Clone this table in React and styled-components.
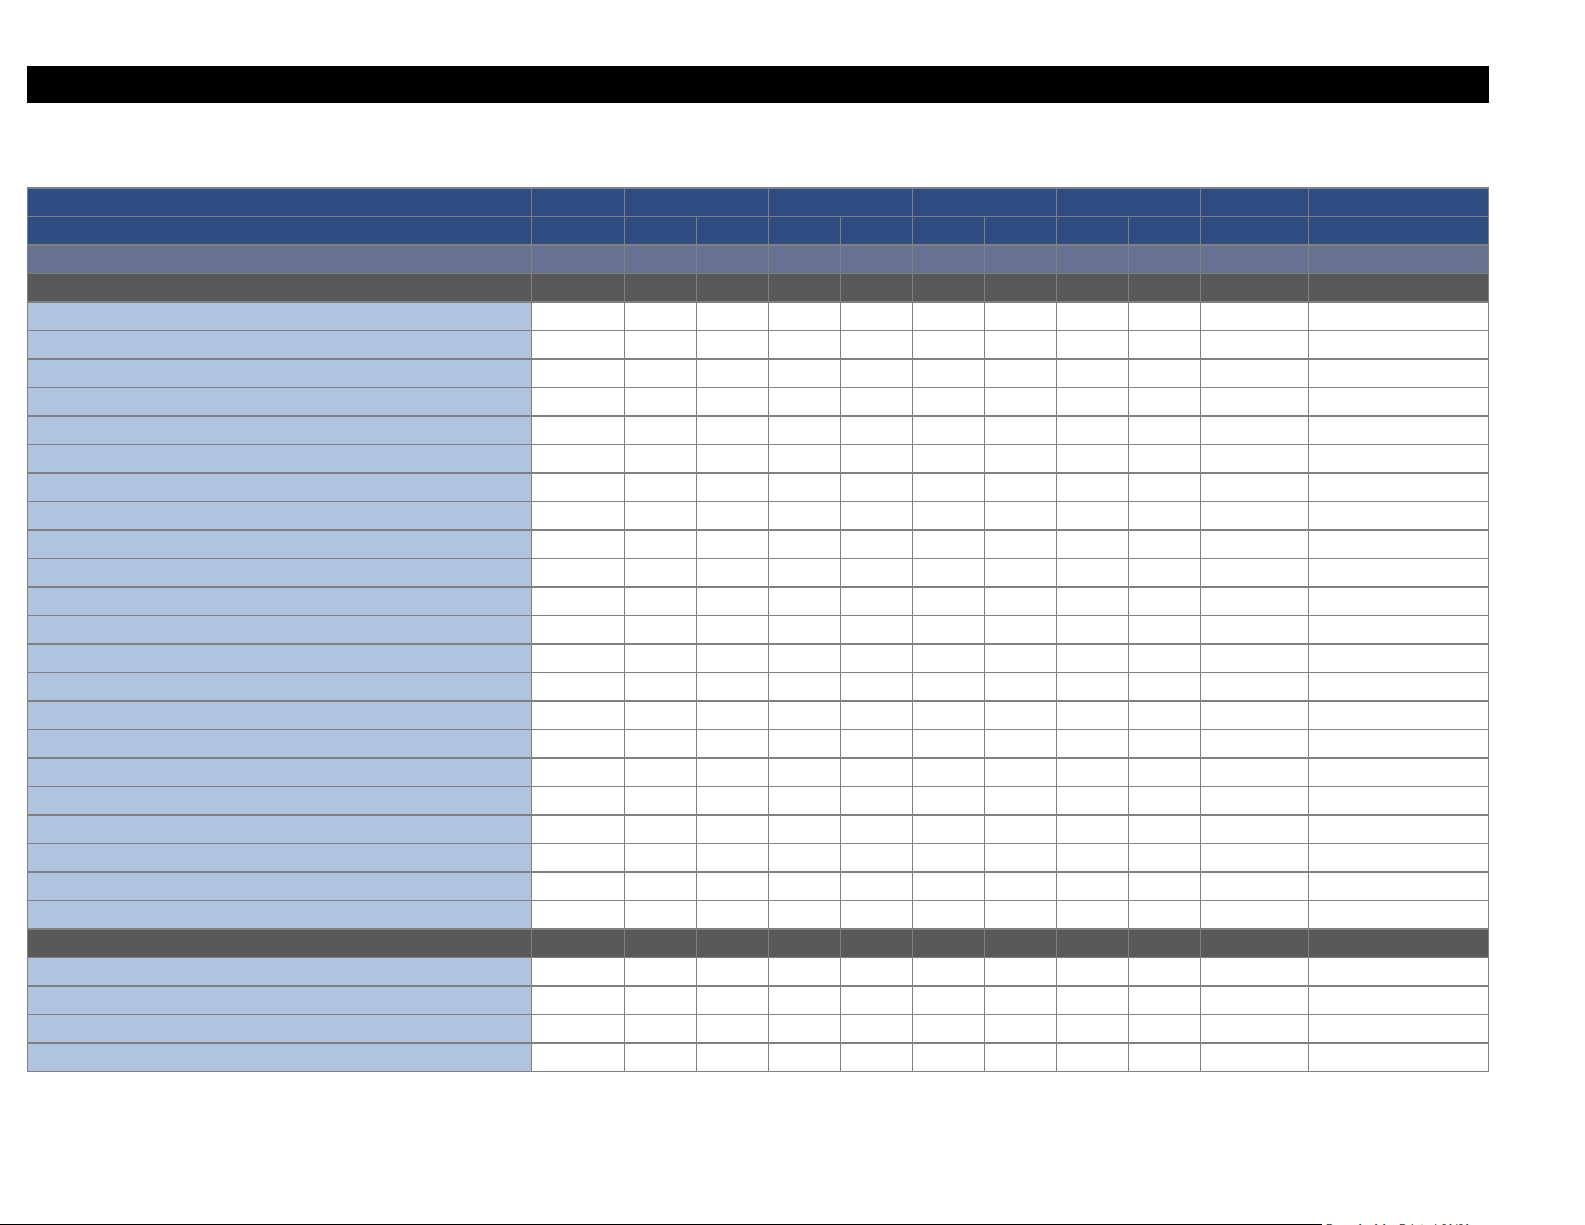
import React from "react";
import styled, { createGlobalStyle } from "styled-components";

const GlobalStyle = createGlobalStyle`
  html, body {
    margin: 0;
    padding: 0;
    background: #ffffff;
    overflow: hidden;
    font-family: "Liberation Sans", Arial, sans-serif;
  }
  * { box-sizing: border-box; }
`;

const Page = styled.div`
  width: 1585px;
  height: 1225px;
  display: flex;
  flex-direction: column;
  padding-top: 66px;
`;

const Content = styled.div`
  display: flex;
  flex-direction: column;
  padding-left: 27px;
  gap: 84px;
`;

const TitleBar = styled.div`
  width: 1462px;
  height: 37px;
  background: #000000;
`;

const Grid = styled.div`
  display: grid;
  grid-template-columns: 504px 93px repeat(8, 72px) 108px 180px;
  width: 1462px;
  border-top: 2px solid #808080;
  border-left: 1px solid #808080;
`;

const BG = {
  head: "#2f4d80",
  sub: "#667292",
  section: "#595959",
  label: "#b0c4de",
  data: "#ffffff",
};

const Cell = styled.div`
  grid-column: span ${(p) => p.$span || 1};
  height: ${(p) => (p.$thick ? 29 : 28)}px;
  background: ${(p) => BG[p.$kind]};
  border-right: 1px solid #808080;
  border-bottom: ${(p) => (p.$thick ? 2 : 1)}px solid #808080;
  color: #ffffff;
  font-size: 11px;
`;

const Footer = styled.div`
  margin-top: 152px;
  display: flex;
  align-items: flex-start;
  height: 1px;
`;

const FooterRule = styled.div`
  width: 1322px;
  border-top: 1px solid #000000;
`;

const FooterText = styled.span`
  margin-left: 4px;
  margin-top: -1px;
  font-size: 11px;
  line-height: 1;
  color: #333333;
  white-space: nowrap;
  letter-spacing: 0.5px;
`;

const twelve = Array.from({ length: 12 }, (_, i) => i);

function Row({ index, kind }) {
  const thick = index % 2 === 1;
  if (kind === "top") {
    const spans = [1, 1, 2, 2, 2, 2, 1, 1];
    return spans.map((s, i) => (
      <Cell key={i} $kind="head" $span={s} $thick={thick} />
    ));
  }
  if (kind === "body") {
    return twelve.map((i) => (
      <Cell key={i} $kind={i === 0 ? "label" : "data"} $thick={thick} />
    ));
  }
  return twelve.map((i) => <Cell key={i} $kind={kind} $thick={thick} />);
}

const rows = [
  "top",
  "head",
  "sub",
  "section",
  ...Array(22).fill("body"),
  "section",
  ...Array(4).fill("body"),
];

export default function App() {
  return (
    <>
      <GlobalStyle />
      <Page>
        <Content>
          <TitleBar />
          <Grid>
            {rows.map((kind, i) => (
              <Row key={i} index={i} kind={kind} />
            ))}
          </Grid>
        </Content>
        <Footer>
          <FooterRule />
          <FooterText>Page 1 of 1 · Printed 01/01</FooterText>
        </Footer>
      </Page>
    </>
  );
}
